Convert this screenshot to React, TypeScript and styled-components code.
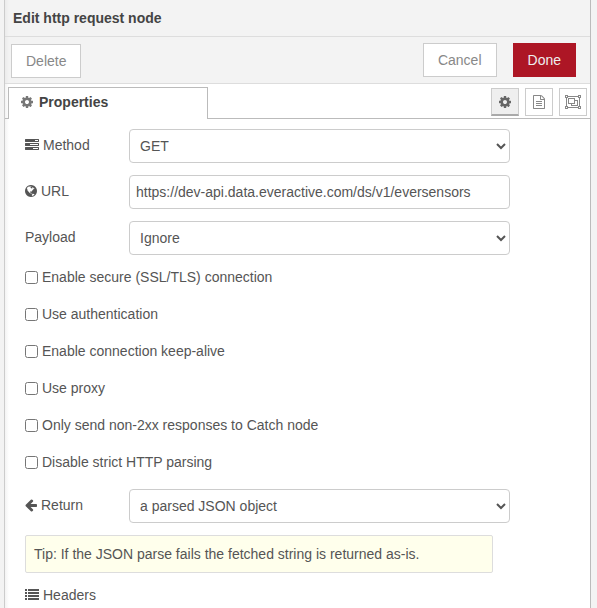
import React from "react";
import styled, { createGlobalStyle, css } from "styled-components";

const GlobalStyle = createGlobalStyle`
  *, *::before, *::after { box-sizing: border-box; }
  html, body { margin: 0; padding: 0; background: #f3f3f3; overflow: hidden; }
  body, button, input, select {
    font-family: "Liberation Sans", Arial, sans-serif;
    font-size: 14px;
    line-height: 20px;
    color: #555;
  }
`;

const Workspace = styled.div`
  display: flex;
  height: 608px;
  padding: 0 6px 0 4px;
  background: #f3f3f3;
  overflow: hidden;
`;

const Tray = styled.section`
  flex: 1;
  display: flex;
  flex-direction: column;
  background: linear-gradient(to right, #f3f3f3, #fff 4px);
  border-left: 1px solid #ccc;
  border-right: 1px solid #bbb;
`;

const TrayHeader = styled.header`
  height: 37px;
  flex: none;
  padding: 8px 8px 0;
  background: linear-gradient(to right, #ebebeb, #f3f3f3 4px);
  border-bottom: 1px solid #ddd;
  color: #444;
  font-weight: bold;
`;

const Toolbar = styled.div`
  display: flex;
  align-items: flex-start;
  gap: 16px;
  height: 47px;
  flex: none;
  padding: 6px 14px 0 6px;
  background: linear-gradient(to right, #ebebeb, #f3f3f3 4px);
  border-bottom: 1px solid #ddd;
`;

const Button = styled.button<{ $primary?: boolean; $leading?: boolean }>`
  height: 34px;
  padding: 0 14px;
  border: 1px solid #ccc;
  border-radius: 0;
  background: #fff;
  color: #888;
  ${(p) =>
    p.$leading &&
    css`
      margin: 1px auto 0 0;
    `}
  ${(p) =>
    p.$primary &&
    css`
      border-color: #ad1625;
      background: #ad1625;
      color: #eee;
    `}
`;

const TabBar = styled.div`
  display: flex;
  height: 35px;
  flex: none;
  padding-top: 3px;
`;

const TabSpacer = styled.div<{ $grow?: boolean }>`
  width: 3px;
  flex: ${(p) => (p.$grow ? 1 : "none")};
  border-bottom: 1px solid #bbb;
`;

const Tab = styled.div`
  display: flex;
  align-items: center;
  gap: 6px;
  width: 200px;
  padding: 0 12px 3px;
  border: 1px solid #bbb;
  border-bottom: 0;
  background: #fff;
  color: #444;
  font-weight: bold;

  svg { color: #777; }
`;

const TabActions = styled.div`
  display: flex;
  gap: 6px;
  padding: 1px 3px 0 0;
  border-bottom: 1px solid #bbb;
`;

const IconButton = styled.button<{ $selected?: boolean }>`
  display: flex;
  align-items: center;
  justify-content: center;
  width: 28px;
  height: 28px;
  padding: 0;
  border: 1px solid #ccc;
  background: ${(p) => (p.$selected ? "#efefef" : "#fff")};
  color: ${(p) => (p.$selected ? "#666" : "#888")};
  ${(p) =>
    p.$selected &&
    css`
      padding-top: 1px;
      border-bottom: 2px solid #aaa;
    `}
`;

const Form = styled.form`
  padding: 10px 20px 0;
`;

const Row = styled.div`
  display: flex;
  height: 34px;
  margin-bottom: 12px;
`;

const Label = styled.label`
  display: flex;
  align-items: center;
  gap: 4px;
  width: 104px;
  height: 32px;
`;

const field = css`
  width: 381px;
  height: 34px;
  margin: 0;
  border: 1px solid #ccc;
  border-radius: 4px;
  background: #fff;
  outline: none;
`;

const Select = styled.select`
  ${field}
  padding: 4px 6px;
`;

const TextInput = styled.input`
  ${field}
  padding: 4px 6px;
`;

const Options = styled.div`
  display: flex;
  flex-direction: column;
  gap: 17px;
  padding: 12px 0 17px;
  margin-top: -12px;
`;

const Option = styled.label`
  display: flex;
  align-items: flex-start;
  gap: 4px;
  height: 20px;

  input { width: 13px; height: 13px; margin: 4px 0 0; }
`;

const Tip = styled.div`
  width: 468px;
  height: 38px;
  padding: 8px;
  border: 1px solid #ddd;
  border-radius: 2px;
  background: #ffffec;
`;

const HeadersLabel = styled(Label)`
  margin-top: 6px;
`;

const Glyph = styled.svg`
  display: block;
  flex: none;
  height: 14px;
  fill: currentColor;
`;

const icons = {
  cog: {
    box: [128, 1536],
    d: "M1152 896q0-106-75-181t-181-75-181 75-75 181 75 181 181 75 181-75 75-181zm512-109v222q0 12-8 23t-20 13l-185 28q-19 54-39 91 35 50 107 138 10 12 10 25t-9 23q-27 37-99 108t-94 71q-12 0-26-9l-138-108q-44 23-91 38-16 136-29 186-7 28-36 28h-222q-14 0-24.5-8.5t-11.5-21.5l-28-184q-49-16-90-37l-141 107q-10 9-25 9-14 0-25-11-126-114-165-168-7-10-7-23 0-12 8-23 15-21 51-66.5t54-70.5q-27-50-41-99l-183-27q-13-2-21-12.5t-8-23.5v-222q0-12 8-23t19-13l186-28q14-46 39-92-40-57-107-138-10-12-10-24 0-10 9-23 26-36 98.5-107.5t94.5-71.5q13 0 26 10l138 107q44-23 91-38 16-136 29-186 7-28 36-28h222q14 0 24.5 8.5t11.5 21.5l28 184q49 16 90 37l142-107q9-9 24-9 13 0 25 10 129 119 165 170 7 8 7 22 0 12-8 23-15 21-51 66.5t-54 70.5q26 50 41 98l183 28q13 2 21 12.5t8 23.5z",
  },
  tasks: {
    box: [0, 1792],
    d: "M1024 1408h640v-128h-640v128zm-384-512h1024v-128h-1024v128zm640-512h384v-128h-384v128zm512 832v256q0 26-19 45t-45 19h-1664q-26 0-45-19t-19-45v-256q0-26 19-45t45-19h1664q26 0 45 19t19 45zm0-512v256q0 26-19 45t-45 19h-1664q-26 0-45-19t-19-45v-256q0-26 19-45t45-19h1664q26 0 45 19t19 45zm0-512v256q0 26-19 45t-45 19h-1664q-26 0-45-19t-19-45v-256q0-26 19-45t45-19h1664q26 0 45 19t19 45z",
  },
  globe: {
    box: [128, 1536],
    d: "M896 128q209 0 385.5 103t279.5 279.5 103 385.5-103 385.5-279.5 279.5-385.5 103-385.5-103-279.5-279.5-103-385.5 103-385.5 279.5-279.5 385.5-103zm274 521q-2 1-9.5 9.5t-13.5 9.5q2 0 4.5-5t5-11 3.5-7q6-7 22-15 14-6 52-12 34-8 51 11-2-2 9.5-13t14.5-12q3-2 15-4.5t15-7.5l2-22q-12 1-17.5-7t-6.5-21q0 2-6 8 0-7-4.5-8t-11.5 1-9 1q-10-3-15-7.5t-8-16.5-4-15q-2-5-9.5-11t-9.5-10q-1-2-2.5-5.5t-3-6.5-4-5.5-5.5-2.5-7 5-7.5 10-4.5 5q-3-2-6-1.5t-4.5 1-4.5 3-5 3.5q-3 2-8.5 3t-8.5 2q15-5-1-11-10-4-16-3 9-4 7.5-12t-8.5-14h5q-1-4-8.5-8.5t-17.5-8.5-13-6q-8-5-34-9.5t-33-.5q-5 6-4.5 10.5t4 14 3.5 12.5q1 6-5.5 13t-6.5 12q0 7 14 15.5t10 21.5q-3 8-16 16t-16 12q-5 8-1.5 18.5t10.5 16.5q2 2 1.5 4t-3.5 4.5-5.5 4-6.5 3.5l-3 2q-11 5-20.5-6t-13.5-26q-7-25-16-30-23-8-29 1-5-13-41-26-25-9-58-4 6-1 0-15-7-15-19-12 3-6 4-17.5t1-13.5q3-13 12-23 1-1 7-8.5t9.5-13.5.5-6q35 4 50-11 5-5 11.5-17t10.5-17q9-6 14-5.5t14.5 5.5 14.5 5q14 1 15.5-11t-7.5-20q12 1 3-17-4-7-8-9-12-4-27 5-8 4 2 8-1-1-9.5 10.5t-16.5 17.5-16-5q-1-1-5.5-13.5t-9.5-13.5q-8 0-16 15 3-8-11-15t-24-8q19-12-8-27-7-4-20.5-5t-19.5 4q-5 7-5.5 11.5t5 8 10.5 5.5 11.5 4 8.5 3q14 10 8 14-2 1-8.5 3.5t-11.5 4.5-6 4q-3 4 0 14t-2 14q-5-5-9-17.5t-7-16.5q7 9-25 6l-10-1q-4 0-16 2t-20.5 1-13.5-8q-4-8 0-20 1-4 4-2-4-3-11-9.5t-10-8.5q-46 15-94 41 6 1 12-1 5-2 13-6.5t10-5.5q34-14 42-7l5-5q14 16 20 25-7-4-30-1-20 6-22 12 7 12 5 18-4-3-11.5-10t-14.5-11-15-5q-16 0-22 1-146 80-235 222 7 7 12 8 4 1 5 9t2.5 11 11.5-3q9 8 3 19 1-1 44 27 19 17 21 21 3 11-10 18-1-2-9-9t-9-4q-3 5 .5 18.5t10.5 12.5q-7 0-9.5 16t-2.5 35.5-1 23.5l2 1q-3 12 5.5 34.5t21.5 19.5q-13 3 20 43 6 8 8 9 3 2 12 7.5t15 10 10 10.5q4 5 10 22.5t14 23.5q-2 6 9.5 20t10.5 23q-1 0-2.5 1t-2.5 1q3 7 15.5 14t15.5 13q1 3 2 10t3 11 8 2q2-20-24-62-15-25-17-29-3-5-5.5-15.5t-4.5-14.5q2 0 6 1.5t8.5 3.5 7.5 4 2 3q-3 7 2 17.5t12 18.5 17 19 12 13q6 6 14 19.5t0 13.5q9 0 20 10.5t17 19.5q5 8 8 26t5 24q2 7 8.5 13.5t12.5 9.5l16 8 13 7q5 2 18.5 10.5t21.5 11.5q10 4 16 4t14.5-2.5 13.5-3.5q15-2 29 15t21 21q36 19 55 11-2 1 .5 7.5t8 15.5 9 14.5 5.5 8.5q5 6 18 15t18 15q6-4 7-9-3 8 7 20t18 10q14-3 14-32-31 15-49-18 0-1-2.5-5.5t-4-8.5-2.5-8.5 0-7.5 5-3q9 0 10-3.5t-2-12.5-4-13q-1-8-11-20t-12-15q-5 9-16 8t-16-9q0 1-1.5 5.5t-1.5 6.5q-13 0-15-1 1-3 2.5-17.5t3.5-22.5q1-4 5.5-12t7.5-14.5 4-12.5-4.5-9.5-17.5-2.5q-19 1-26 20-1 3-3 10.5t-5 11.5-9 7q-7 3-24 2t-24-5q-13-8-22.5-29t-9.5-37q0-10 2.5-26.5t3-25-5.5-24.5q3-2 9-9.5t10-10.5q2-1 4.5-1.5t4.5 0 4-1.5 3-6q-1-1-4-3-3-3-4-3 7 3 28.5-1.5t27.5 1.5q15 11 22-2 0-1-2.5-9.5t-.5-13.5q5 27 29 9 3 3 15.5 5t17.5 5q3 2 7 5.5t5.5 4.5 5-.5 8.5-6.5q10 14 12 24 11 40 19 44 7 3 11 2t4.5-9.5 0-14-1.5-12.5l-1-8v-18l-1-8q-15-3-18.5-12t1.5-18.5 15-18.5q1-1 8-3.5t15.5-6.5 12.5-8q21-19 15-35 7 0 11-9-1 0-5-3t-7.5-5-4.5-2q9-5 2-16 5-3 7.5-11t7.5-10q9 12 21 2 7-8 1-16 5-7 20.5-10.5t18.5-9.5q7 2 8-2t1-12 3-12q4-5 15-9t13-5l17-11q3-4 0-4 18 2 31-11 10-11-6-20 3-6-3-9.5t-15-5.5q3-1 11.5-.5t10.5-1.5q15-10-7-16-17-5-43 12zm-163 877q206-36 351-189-3-3-12.5-4.5t-12.5-3.5q-18-7-24-8 1-7-2.5-13t-8-9-12.5-8-11-7q-2-2-7-6t-7-5.5-7.5-4.5-8.5-2-10 1l-3 1q-3 1-5.5 2.5t-5.5 3-4 3 0 2.5q-21-17-36-22-5-1-11-5.5t-10.5-7-10-1.5-11.5 7q-5 5-6 15t-2 13q-7-5 0-17.5t2-18.5q-3-6-10.5-4.5t-12 4.5-11.5 8.5-9 6.5-8.5 5.5-8.5 7.5q-3 4-6 12t-5 11q-2-4-11.5-6.5t-9.5-5.5q2 10 4 35t5 38q7 31-12 48-27 25-29 40-4 22 12 26 0 7-8 20.5t-7 21.5q0 6 2 16z",
  },
  arrowLeft: {
    box: [128, 1536],
    d: "M1664 896v128q0 53-32.5 90.5t-84.5 37.5h-704l293 294q38 36 38 90t-38 90l-75 76q-37 37-90 37-52 0-91-37l-651-652q-37-37-37-90 0-52 37-91l651-650q38-38 91-38 52 0 90 38l75 74q38 38 38 91t-38 91l-293 293h704q52 0 84.5 37.5t32.5 90.5z",
  },
  list: {
    box: [0, 1792],
    d: "M0 1280h256v256h-256zM0 896h256v256h-256zM0 512h256v256h-256zM0 128h256v256h-256zM384 1280h1408v256h-1408zM384 896h1408v256h-1408zM384 512h1408v256h-1408zM384 128h1408v256h-1408z",
  },
  fileText: {
    box: [128, 1536],
    d: "M1596 380q28 28 48 76t20 88v1152q0 40-28 68t-68 28h-1344q-40 0-68-28t-28-68v-1600q0-40 28-68t68-28h896q40 0 88 20t76 48zm-444-244v376h376q-10-29-22-41l-313-313q-12-12-41-22zm384 1528v-1024h-416q-40 0-68-28t-28-68v-416h-768v1536h1280zm-1024-864q0-14 9-23t23-9h704q14 0 23 9t9 23v64q0 14-9 23t-23 9h-704q-14 0-23-9t-9-23v-64zm736 224q14 0 23 9t9 23v64q0 14-9 23t-23 9h-704q-14 0-23-9t-9-23v-64q0-14 9-23t23-9h704zm0 256q14 0 23 9t9 23v64q0 14-9 23t-23 9h-704q-14 0-23-9t-9-23v-64q0-14 9-23t23-9h704z",
  },
  objectGroup: {
    box: [0, 2048],
    d: "M2048 384h-128v1024h128v384h-384v-128h-1280v128h-384v-384h128v-1024h-128v-384h384v128h1280v-128h384v384zm-256-256v128h128v-128h-128zm-1664 0v128h128v-128h-128zm128 1536v-128h-128v128h128zm1408-128v-128h128v-1024h-128v-128h-1280v128h-128v1024h128v128h1280zm256 128v-128h-128v128h128zm-640-1024h384v768h-896v-256h-384v-768h896v256zm-768 384h640v-512h-640v512zm1024 256v-512h-256v384h-384v128h640z",
  },
};

function Icon({ name }: { name: keyof typeof icons }) {
  const { box, d } = icons[name];
  return (
    <Glyph viewBox={`${box[0]} 0 ${box[1]} 1792`} width={box[1] / 128} aria-hidden="true">
      <path fillRule="evenodd" d={d} />
    </Glyph>
  );
}

const options = [
  "Enable secure (SSL/TLS) connection",
  "Use authentication",
  "Enable connection keep-alive",
  "Use proxy",
  "Only send non-2xx responses to Catch node",
  "Disable strict HTTP parsing",
];

export default function App() {
  return (
    <>
      <GlobalStyle />
      <Workspace>
        <Tray>
          <TrayHeader>Edit http request node</TrayHeader>
          <Toolbar>
            <Button $leading>Delete</Button>
            <Button>Cancel</Button>
            <Button $primary>Done</Button>
          </Toolbar>
          <TabBar>
            <TabSpacer />
            <Tab>
              <Icon name="cog" />
              Properties
            </Tab>
            <TabSpacer $grow />
            <TabActions>
              <IconButton $selected aria-label="Properties">
                <Icon name="cog" />
              </IconButton>
              <IconButton aria-label="Description">
                <Icon name="fileText" />
              </IconButton>
              <IconButton aria-label="Appearance">
                <Icon name="objectGroup" />
              </IconButton>
            </TabActions>
          </TabBar>
          <Form>
            <Row>
              <Label htmlFor="method"><Icon name="tasks" />Method</Label>
              <Select id="method"><option>GET</option></Select>
            </Row>
            <Row>
              <Label htmlFor="url"><Icon name="globe" />URL</Label>
              <TextInput id="url" defaultValue="https://dev-api.data.everactive.com/ds/v1/eversensors" />
            </Row>
            <Row>
              <Label htmlFor="payload">Payload</Label>
              <Select id="payload"><option>Ignore</option></Select>
            </Row>
            <Options>
              {options.map((text) => (
                <Option key={text}>
                  <input type="checkbox" />
                  {text}
                </Option>
              ))}
            </Options>
            <Row>
              <Label htmlFor="return"><Icon name="arrowLeft" />Return</Label>
              <Select id="return"><option>a parsed JSON object</option></Select>
            </Row>
            <Tip>Tip: If the JSON parse fails the fetched string is returned as-is.</Tip>
            <HeadersLabel as="div"><Icon name="list" />Headers</HeadersLabel>
          </Form>
        </Tray>
      </Workspace>
    </>
  );
}
